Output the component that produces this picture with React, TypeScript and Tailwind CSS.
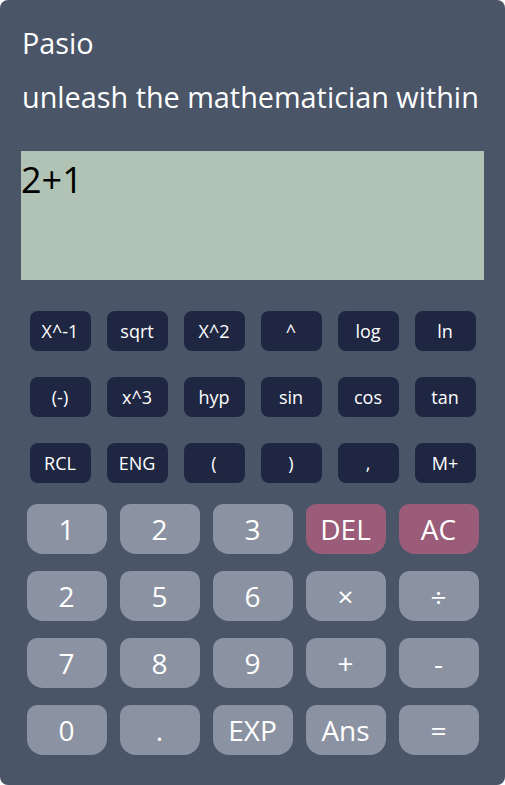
const fnKeys = [
  'X^-1', 'sqrt', 'X^2', '^', 'log', 'ln',
  '(-)', 'x^3', 'hyp', 'sin', 'cos', 'tan',
  'RCL', 'ENG', '(', ')', ',', 'M+',
]

const mainKeys = [
  '1', '2', '3', 'DEL', 'AC',
  '2', '5', '6', '×', '÷',
  '7', '8', '9', '+', '-',
  '0', '.', 'EXP', 'Ans', '=',
]

export default function App() {
  return (
    <div className="h-screen w-full bg-white" style={{ fontFamily: '"Open Sans", "Noto Sans", sans-serif' }}>
      <div className="flex h-[785px] flex-col rounded-lg bg-[#4a5568] text-white">
        {/* header */}
        <div className="px-[22px] pt-[23px]">
          <h1 className="text-[28.8px] leading-[40px]">Pasio</h1>
          <p className="mt-[14px] text-[28.8px] leading-[40px]">unleash the mathematician within</p>
        </div>

        {/* display */}
        <div className="mx-[21px] mt-[34px] h-[129px] bg-[#b1c3b4] pt-[4px] text-[36px] leading-[49px] text-black">
          2+1
        </div>

        {/* function keys */}
        <div className="mt-[31px] grid grid-cols-[repeat(6,61px)] justify-center gap-x-[16px] gap-y-[26px]">
          {fnKeys.map((k, i) => (
            <button
              key={i}
              className="flex h-[40px] items-center justify-center rounded-[8px] bg-[#1f2641] text-[18px] text-white"
            >
              {k}
            </button>
          ))}
        </div>

        {/* main keys */}
        <div className="mt-[21px] grid grid-cols-[repeat(5,80px)] justify-center gap-x-[13px] gap-y-[17px]">
          {mainKeys.map((k, i) => (
            <button
              key={i}
              className={`flex h-[50px] items-center justify-center rounded-t-[10px] rounded-b-[16px] text-[28px] text-white ${
                k === 'DEL' || k === 'AC' ? 'bg-[#9b5c79]' : 'bg-[#8b92a2]'
              }`}
            >
              {k}
            </button>
          ))}
        </div>
      </div>
    </div>
  )
}
